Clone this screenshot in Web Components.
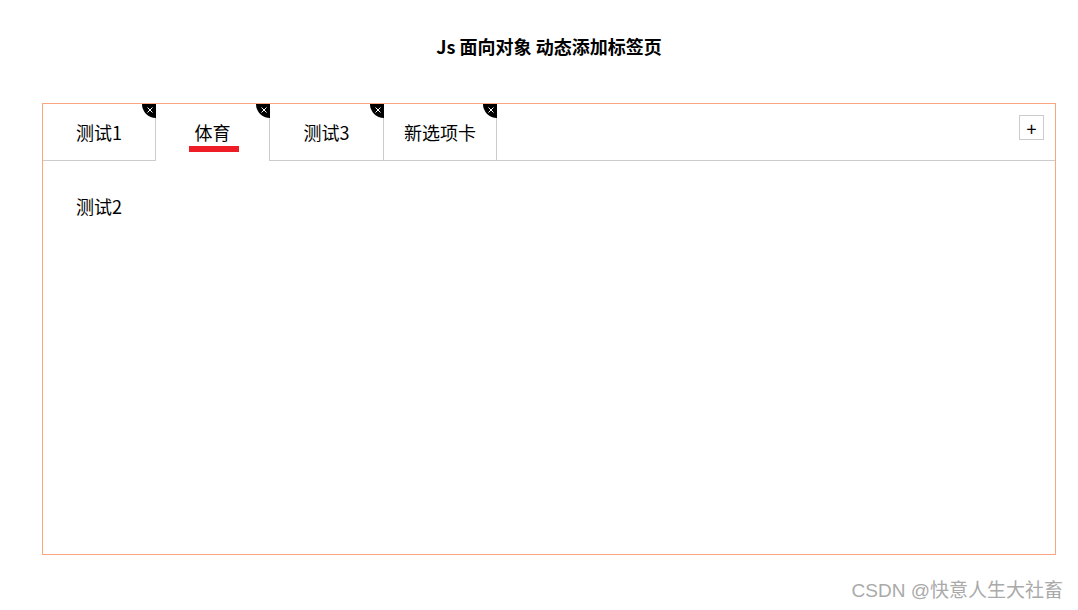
<!DOCTYPE html>
<html lang="zh">
<head>
<meta charset="utf-8">
<title>Js 面向对象 动态添加标签页</title>
<style>
  html, body { margin: 0; height: 100%; background: #fff; }
  body { font-family: "Noto Sans CJK SC", "Noto Sans", sans-serif; color: #000; position: relative; overflow: hidden; }
</style>
</head>
<body>
<tab-page>
  <span slot="title">Js 面向对象 动态添加标签页</span>
  <tab-item label="测试1" style="--w: 112px"></tab-item>
  <tab-item label="体育" active></tab-item>
  <tab-item label="测试3"></tab-item>
  <tab-item label="新选项卡" style="--w: 112px"></tab-item>
  <span slot="content">测试2</span>
</tab-page>
<water-mark>CSDN @快意人生大社畜</water-mark>

<script>
function register(name, clz) {
  !customElements.get(name) && customElements.define(name, clz);
}

class TabPage extends HTMLElement {
  constructor() {
    super();
    this.attachShadow({ mode: "open" });
    this.shadowRoot.innerHTML = `
      <style>
        :host { display: block; padding: 33px 22px 0 42px; }
        h4 {
          margin: 0 0 43px;
          font-size: 18px;
          line-height: 27px;
          font-weight: 700;
          text-align: center;
        }
        .box { height: 450px; border: 1px solid #fca67f; display: flex; flex-direction: column; }
        nav { height: 56px; flex: none; display: flex; justify-content: space-between; border-bottom: 1px solid #ccc; }
        .tabs { display: flex; }
        .add {
          flex: none;
          box-sizing: border-box;
          width: 25px;
          height: 25px;
          margin: 11px 11px 0 0;
          border: 1px solid #ccc;
          display: flex;
          align-items: center;
          justify-content: center;
          font-size: 18px;
          line-height: 1;
        }
        .content { padding: 29px 33px; font-size: 18px; line-height: 32px; }
      </style>
      <h4><slot name="title"></slot></h4>
      <div class="box">
        <nav>
          <div class="tabs"><slot></slot></div>
          <div class="add">+</div>
        </nav>
        <div class="content"><slot name="content"></slot></div>
      </div>
    `;
  }
}

class TabItem extends HTMLElement {
  constructor() {
    super();
    this.attachShadow({ mode: "open" });
    const active = this.hasAttribute("active");
    this.shadowRoot.innerHTML = `
      <style>
        :host {
          display: block;
          position: relative;
          width: var(--w, 113px);
          height: 56px;
          border-right: 1px solid #ccc;
          font-size: 18px;
          line-height: 56px;
          text-align: center;
          ${active ? "height: 57px; background: #fff;" : ""}
        }
        .underline {
          position: absolute;
          left: 33px;
          bottom: 9px;
          width: 50px;
          height: 6px;
          background: #ee1c25;
        }
        .close {
          position: absolute;
          top: 0;
          right: -1px;
          width: 14px;
          height: 14px;
          background: #000;
          border-bottom-left-radius: 14px;
          display: flex;
          align-items: center;
          justify-content: center;
        }
        svg { display: block; width: 6px; height: 6px; margin: 0 0 2px 2px; }
      </style>
      <span>${this.getAttribute("label")}</span>
      ${active ? '<div class="underline"></div>' : ""}
      <div class="close">
        <svg viewBox="0 0 6 6"><path d="M.5.5l5 5M5.500.5l-5 5" stroke="#fff" stroke-width="1" fill="none"/></svg>
      </div>
    `;
  }
}

class WaterMark extends HTMLElement {
  constructor() {
    super();
    this.attachShadow({ mode: "open" });
    this.shadowRoot.innerHTML = `
      <style>
        :host {
          position: absolute;
          right: 15px;
          top: 577px;
          font-family: "Liberation Sans", "Noto Sans CJK SC", sans-serif;
          font-size: 19px;
          line-height: 28px;
          color: #aaa;
          white-space: nowrap;
        }
      </style>
      <slot></slot>
    `;
  }
}

register("tab-page", TabPage);
register("tab-item", TabItem);
register("water-mark", WaterMark);
</script>
</body>
</html>
